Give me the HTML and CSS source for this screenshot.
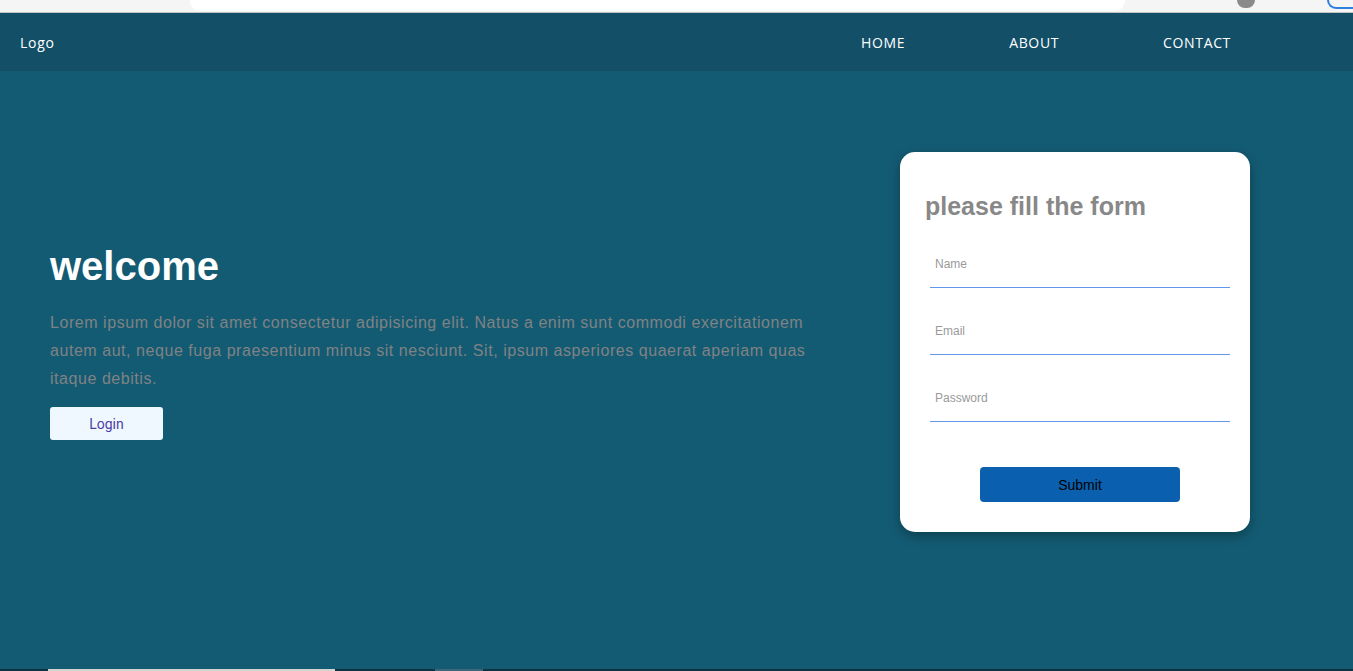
FILE: index.html
```html
<!DOCTYPE html>
<html lang="en">
<head>
<meta charset="utf-8">
<title>Welcome</title>
<link rel="stylesheet" href="styles.css">
</head>
<body>
<div class="chrome">
  <div class="chrome-left"></div>
  <div class="urlbar"></div>
  <div class="chrome-right">
    <span class="chrome-avatar"></span>
    <span class="chrome-badge"></span>
  </div>
</div>
<nav class="navbar">
  <div class="logo">Logo</div>
  <ul class="nav-links">
    <li>HOME</li>
    <li>ABOUT</li>
    <li>CONTACT</li>
  </ul>
</nav>
<main class="main">
  <section class="hero">
    <h1 class="hero-title">welcome</h1>
    <p class="hero-text">Lorem ipsum dolor sit amet consectetur adipisicing elit. Natus a enim sunt commodi exercitationem autem aut, neque fuga praesentium minus sit nesciunt. Sit, ipsum asperiores quaerat aperiam quas itaque debitis.</p>
    <button class="login-btn">Login</button>
  </section>
  <form class="card">
    <h2 class="card-title">please fill the form</h2>
    <input class="field" type="text" placeholder="Name">
    <input class="field" type="email" placeholder="Email">
    <input class="field" type="password" placeholder="Password">
    <button class="submit-btn" type="button">Submit</button>
  </form>
</main>
<div class="taskbar">
  <span class="tb-a"></span>
  <span class="tb-gap"></span>
  <span class="tb-b"></span>
</div>
</body>
</html>
```
FILE: styles.css
```css
html, body {
  margin: 0;
  padding: 0;
}
body {
  width: 1353px;
  height: 671px;
  overflow: hidden;
  background: #135b73;
  font-family: "Liberation Sans", Arial, sans-serif;
  display: flex;
  flex-direction: column;
}
.chrome {
  height: 12px;
  background: #f5f5f5;
  border-bottom: 1px solid #c4c4c4;
  display: flex;
  flex-shrink: 0;
}
.chrome-left {
  width: 190px;
}
.urlbar {
  width: 935px;
  height: 11px;
  background: #ffffff;
  border-radius: 0 0 10px 10px;
}
.chrome-right {
  flex: 1;
  display: flex;
  justify-content: flex-end;
  gap: 72px;
}
.chrome-avatar {
  width: 18px;
  height: 8px;
  background: #8a8a8a;
  border-radius: 0 0 9px 9px;
}
.chrome-badge {
  width: 26px;
  height: 9px;
  border: 2px solid #2f7fe0;
  border-top: none;
  border-right: none;
  border-radius: 0 0 0 12px;
  box-sizing: border-box;
}
.navbar {
  height: 58px;
  background: #144f68;
  display: flex;
  align-items: center;
  justify-content: space-between;
  padding: 0 122px 0 20px;
  flex-shrink: 0;
  font-family: "Open Sans", "Noto Sans", sans-serif;
  color: #ffffff;
}
.logo {
  font-size: 14px;
  letter-spacing: 0.7px;
}
.nav-links {
  list-style: none;
  margin: 0;
  padding: 0;
  display: flex;
  gap: 104px;
  font-size: 14px;
  letter-spacing: 0.65px;
}
.main {
  flex: 1;
  display: flex;
  align-items: flex-start;
  padding: 81px 103px 0 50px;
  box-sizing: border-box;
}
.hero {
  width: 780px;
  display: flex;
  flex-direction: column;
  align-items: flex-start;
  padding-top: 91px;
}
.hero-title {
  margin: 0;
  font-size: 40px;
  font-weight: bold;
  line-height: 46px;
  color: #ffffff;
}
.hero-text {
  margin: 20px 0 14px;
  font-size: 16px;
  line-height: 28px;
  letter-spacing: 0.55px;
  color: #808283;
}
.login-btn {
  width: 113px;
  height: 33px;
  border: none;
  border-radius: 3px;
  background: #f0f8ff;
  color: #4b3fa6;
  font-family: Roboto, "Liberation Sans", sans-serif;
  font-size: 14px;
  padding: 0;
}
.card {
  margin-left: auto;
  width: 350px;
  height: 380px;
  box-sizing: border-box;
  background: #ffffff;
  border-radius: 15px;
  box-shadow: 0 4px 12px rgba(0, 0, 0, 0.3);
  display: flex;
  flex-direction: column;
  padding: 40px 0 30px;
}
.card-title {
  margin: 0 0 20px 25px;
  font-size: 25px;
  font-weight: bold;
  line-height: 28px;
  color: #888888;
}
.field {
  width: 300px;
  height: 48px;
  box-sizing: border-box;
  margin: 0 0 19px 30px;
  padding: 0 5px;
  border: none;
  border-bottom: 1px solid #6495ed;
  outline: none;
  font-family: "Liberation Sans", Arial, sans-serif;
  font-size: 12px;
  background: transparent;
}
.field::placeholder {
  color: #9a9a9a;
}
.submit-btn {
  width: 200px;
  height: 35px;
  margin: 26px 0 0 80px;
  border: none;
  border-radius: 4px;
  background: #0a60ae;
  color: #000000;
  font-family: "Liberation Sans", Arial, sans-serif;
  font-size: 14px;
  padding: 0;
}
.taskbar {
  height: 2px;
  background: #0f3242;
  display: flex;
  flex-shrink: 0;
}
.tb-a {
  width: 287px;
  margin-left: 48px;
  background: #d4d4d4;
}
.tb-gap {
  width: 100px;
}
.tb-b {
  width: 48px;
  background: #3f6676;
}
```
